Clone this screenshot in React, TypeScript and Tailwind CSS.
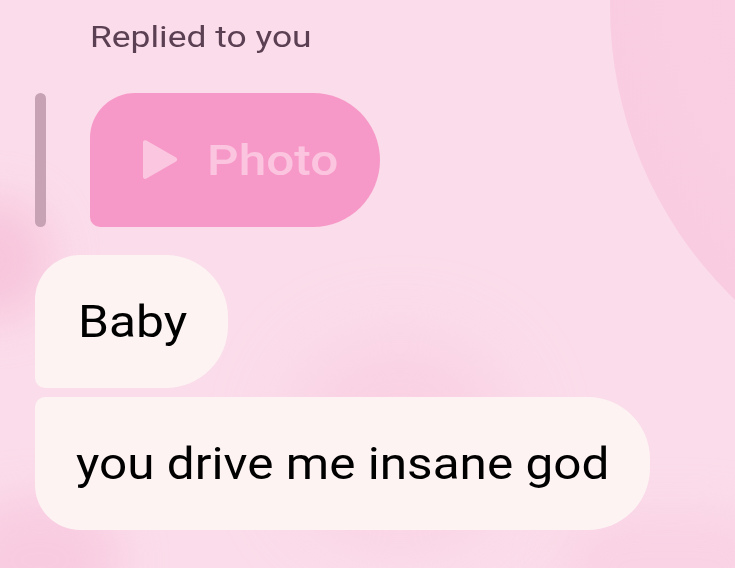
import React from "react";

const PlayIcon = () => (
  <svg width="36" height="42" viewBox="0 0 36 42" className="shrink-0">
    <path
      d="M1 3.5 C1 1.5 2.8 0.6 4.4 1.6 L34 18.6 C35.6 19.6 35.6 21.4 34 22.4 L4.4 39.6 C2.8 40.6 1 39.6 1 37.6 Z"
      fill="#fbc7e0"
    />
  </svg>
);

export default function App() {
  return (
    <div
      className="relative w-[735px] h-[568px] overflow-hidden bg-[#fbdcea] text-black"
      style={{ fontFamily: "Roboto, 'Liberation Sans', sans-serif" }}
    >
      {/* soft background blobs */}
      <div className="absolute left-[610px] top-[-402px] w-[816px] h-[816px] rounded-full bg-[radial-gradient(circle_at_55%_42%,#fbd6e8_0%,#f9cbe1_80%,#f6b6d6_100%)]" />
      <div className="absolute left-[290px] top-[340px] w-[220px] h-[200px] rounded-full bg-[#f8c9de] opacity-60 blur-2xl" />
      <div className="absolute left-[-60px] top-[200px] w-[110px] h-[120px] rounded-full bg-[#f6bcd6] opacity-70 blur-xl" />
      <div className="absolute left-[-40px] top-[500px] w-[160px] h-[120px] rounded-full bg-[#f7c0da] opacity-60 blur-xl" />
      <div className="absolute left-[560px] top-[510px] w-[220px] h-[120px] rounded-full bg-[#f9cde1] opacity-60 blur-xl" />

      <div className="relative flex flex-col pl-[35px] pt-[18px]">
        <div className="pl-[55px] text-[30px] leading-[38px] text-[#5b3f52]">
          <span className="inline-block origin-left scale-x-[1.18]">Replied to you</span>
        </div>

        <div className="mt-[37px] flex items-stretch">
          <div className="w-[11px] h-[134px] rounded-full bg-[#c6a2b4]" />
          <div className="ml-[44px] flex h-[134px] w-[290px] items-center rounded-tl-[45px] rounded-bl-[10px] rounded-r-[67px] bg-[#f799c8] pl-[52px]">
            <PlayIcon />
            <span className="ml-[29px] inline-block origin-left scale-x-[1.18] text-[42px] font-medium text-[#fbc5df]">
              Photo
            </span>
          </div>
        </div>

        <div className="mt-[28px] flex h-[133px] w-[193px] items-center rounded-tl-[45px] rounded-bl-[10px] rounded-r-[62px] bg-[#fdf3f3] pl-[43px]">
          <span className="inline-block origin-left scale-x-[1.13] text-[44px]">Baby</span>
        </div>

        <div className="mt-[9px] flex h-[133px] w-[615px] items-center rounded-tl-[10px] rounded-bl-[45px] rounded-r-[62px] bg-[#fdf3f3] pl-[41px]">
          <span className="inline-block origin-left scale-x-[1.1] text-[45px]">
            you drive me insane god
          </span>
        </div>
      </div>
    </div>
  );
}
